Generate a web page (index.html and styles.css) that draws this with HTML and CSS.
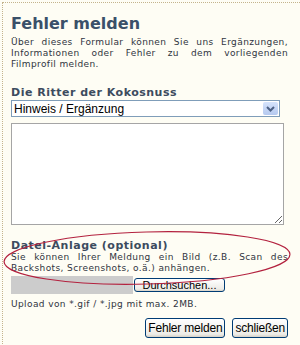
FILE: index.html
```html
<!DOCTYPE html>
<html lang="de">
<head>
    <meta charset="UTF-8">
    <title>Fehler melden</title>
    <link rel="stylesheet" href="styles.css">
</head>
<body>
    <div class="box">
        <h1 class="title">Fehler melden</h1>
        <p class="text">Über dieses Formular können Sie uns Ergänzungen, Informationen oder Fehler zu dem vorliegenden Filmprofil melden.</p>

        <h2 class="label">Die Ritter der Kokosnuss</h2>
        <div class="select">
            <span class="select-value">Hinweis / Ergänzung</span>
            <span class="select-arrow">
                <svg width="15" height="14" viewBox="0 0 15 14">
                    <path d="M4 5 L7.5 8.5 L11 5" fill="none" stroke="#4d6185" stroke-width="2"/>
                </svg>
            </span>
        </div>
        <textarea class="message"></textarea>

        <h2 class="label label-file">Datei-Anlage (optional)</h2>
        <p class="text">Sie können Ihrer Meldung ein Bild (z.B. Scan des Backshots, Screenshots, o.ä.) anhängen.</p>
        <div class="file">
            <span class="file-field"></span>
            <button class="btn file-btn" type="button">Durchsuchen...</button>
        </div>
        <p class="hint">Upload von *.gif / *.jpg mit max. 2MB.</p>

        <div class="actions">
            <button class="btn" type="button">Fehler melden</button>
            <button class="btn" type="button">schließen</button>
        </div>

        <svg class="mark" width="300" height="345" viewBox="0 0 300 345">
            <ellipse cx="147" cy="258" rx="143" ry="26" transform="rotate(-1.5 147 258)" fill="none" stroke="#b3223f" stroke-width="1.2"/>
        </svg>
    </div>
</body>
</html>
```

FILE: styles.css
```css
body {
    margin: 0;
    background-color: #fefdf4;
    font-family: "DejaVu Sans", Verdana, sans-serif;
}
.box {
    position: relative;
    margin: 2px 0 0 2px;
    padding: 11px 12px 10px 8px;
    min-height: 328px;
    border-top: 1px dotted #c4b48c;
    border-left: 1px dotted #c4b48c;
}
.title {
    margin: 0;
    font-size: 16px;
    line-height: 20px;
    color: #3a5069;
}
.text {
    margin: 3px 0 0;
    font-size: 9px;
    line-height: 11px;
    letter-spacing: 0.4px;
    text-align: justify;
    color: #2f3440;
}
.label {
    margin: 16px 0 0;
    font-size: 11px;
    line-height: 13px;
    letter-spacing: 0.5px;
    color: #3c4b5e;
}
.select {
    display: flex;
    align-items: center;
    justify-content: space-between;
    width: 267px;
    height: 15px;
    margin-top: 1px;
    border: 1px solid #7f9db9;
    background-color: #fff;
    font-family: "Liberation Sans", Arial, sans-serif;
    font-size: 12px;
}
.select-value {
    padding-left: 2px;
    color: #000;
}
.select-arrow {
    display: flex;
    width: 15px;
    height: 13px;
    margin-right: 1px;
    border-radius: 2px;
    background: linear-gradient(#d6e3fb, #b5c9ef);
}
.message {
    display: block;
    box-sizing: border-box;
    width: 273px;
    height: 102px;
    margin: 6px 0 0;
    border: 1px solid #a5a5a5;
    background-color: #fff;
    resize: both;
}
.label-file {
    margin-top: 14px;
}
.label-file + .text {
    margin-top: 0;
}
.file {
    display: flex;
    align-items: center;
    gap: 1px;
    height: 18px;
    margin-top: 2px;
}
.file-field {
    width: 122px;
    height: 18px;
    background-color: #cccccc;
}
.btn {
    height: 20px;
    padding: 0 2px;
    border: 1px solid #003c74;
    border-radius: 3px;
    background: linear-gradient(#ffffff, #ecebe6 85%, #d6d0c5);
    font-family: "Liberation Sans", Arial, sans-serif;
    font-size: 12px;
    letter-spacing: -0.2px;
    color: #000;
}
.file-btn {
    width: 91px;
    height: 14px;
    font-size: 11px;
    line-height: 11px;
    letter-spacing: 0;
}
.hint {
    margin: 4px 0 0;
    font-size: 9px;
    line-height: 12px;
    letter-spacing: 0.4px;
    color: #2f3440;
}
.actions {
    display: flex;
    justify-content: flex-end;
    gap: 7px;
    margin-top: 8px;
}
.mark {
    position: absolute;
    top: -3px;
    left: -3px;
    pointer-events: none;
}
```
